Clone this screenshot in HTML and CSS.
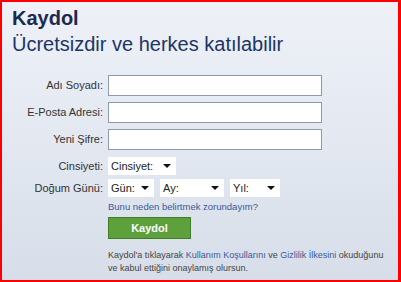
FILE: index.html
```html
<!DOCTYPE html>
<html lang="tr">
  <head>
    <meta charset="UTF-8" />
    <title>Kaydol</title>
    <link rel="stylesheet" href="styles.css">
  </head>
  <body>
    <div class="signup">
      <h1 class="title">Kaydol</h1>
      <h2 class="subtitle">Ücretsizdir ve herkes katılabilir</h2>

      <form class="form">
        <label class="label" for="ad">Adı Soyadı:</label>
        <input class="text" type="text" id="ad" />

        <label class="label" for="eposta">E-Posta Adresi:</label>
        <input class="text" type="text" id="eposta" />

        <label class="label" for="sifre">Yeni Şifre:</label>
        <input class="text" type="password" id="sifre" />

        <label class="label label-small row-sex">Cinsiyeti:</label>
        <div class="selects row-sex">
          <span class="select w-cins">Cinsiyet:<i class="arrow"></i></span>
        </div>

        <label class="label label-small row-birth">Doğum Günü:</label>
        <div class="birth row-birth">
          <div class="selects">
            <span class="select w-gun">Gün:<i class="arrow"></i></span>
            <span class="select w-ay">Ay:<i class="arrow"></i></span>
            <span class="select w-yil">Yıl:<i class="arrow"></i></span>
          </div>
          <a class="why" href="#">Bunu neden belirtmek zorundayım?</a>
        </div>

        <span></span>
        <div class="actions">
          <button type="button" class="submit">Kaydol</button>
          <p class="terms">Kaydol'a tıklayarak <a href="#">Kullanım Koşullarını</a> ve <a href="#">Gizlilik İlkesini</a> okuduğunu<br />ve kabul ettiğini onaylamış olursun.</p>
        </div>
      </form>
    </div>
  </body>
</html>
```

FILE: styles.css
```css
html,
body {
  margin: 0;
  padding: 0;
}

body {
  font-family: "Liberation Sans", Arial, sans-serif;
  color: #333;
}

.signup {
  box-sizing: border-box;
  width: 401px;
  height: 282px;
  border: 2px solid #ff0000;
  border-right-width: 3px;
  background: linear-gradient(to bottom, #eef1f7 0%, #e3e8f1 50%, #d7dee9 100%);
  padding: 5px 0 0 10px;
  overflow: hidden;
}

.title {
  margin: 0;
  font-size: 20px;
  line-height: 23px;
  font-weight: bold;
  color: #1c2a4f;
}

.subtitle {
  margin: 2px 0 0;
  font-size: 20px;
  line-height: 24px;
  font-weight: normal;
  color: #1c3566;
}

.form {
  display: grid;
  grid-template-columns: 91px 1fr;
  column-gap: 5px;
  row-gap: 6px;
  margin-top: 19px;
  align-items: start;
}

.label {
  text-align: right;
  font-size: 11px;
  line-height: 21px;
  color: #333;
}

.label-small {
  line-height: 18px;
}

.row-sex {
  margin-top: 1px;
}

.row-birth {
  margin-top: -2px;
}

.text {
  box-sizing: border-box;
  width: 214px;
  height: 21px;
  margin: 0;
  border: 1px solid #8e99ad;
  background: #fff;
  padding: 2px 4px;
  font-size: 11px;
}

.selects {
  display: flex;
  gap: 6px;
}

.select {
  box-sizing: border-box;
  display: flex;
  align-items: center;
  justify-content: space-between;
  height: 18px;
  padding: 0 5px 0 3px;
  background: #fff;
  font-size: 11px;
  color: #222;
}

.w-cins {
  width: 68px;
}

.w-gun {
  width: 46px;
}

.w-ay {
  width: 64px;
}

.w-yil {
  width: 50px;
}

.arrow {
  width: 0;
  height: 0;
  border-left: 4px solid transparent;
  border-right: 4px solid transparent;
  border-top: 4px solid #111;
}

.birth {
  display: flex;
  flex-direction: column;
}

.why {
  margin-top: 4px;
  font-size: 9.5px;
  line-height: 12px;
  color: #3b5998;
  text-decoration: none;
}

.actions {
  display: flex;
  flex-direction: column;
  align-items: flex-start;
  margin-top: -2px;
}

.submit {
  width: 83px;
  height: 22px;
  background-color: #5ea13c;
  border: 1px solid #3d7d27;
  color: #fff;
  font-family: "Liberation Sans", Arial, sans-serif;
  font-size: 11px;
  font-weight: bold;
  padding: 0;
}

.terms {
  margin: 10px 0 0;
  font-size: 9px;
  line-height: 13px;
  white-space: nowrap;
  color: #444;
}

.terms a {
  color: #3b5998;
  text-decoration: none;
}
```
